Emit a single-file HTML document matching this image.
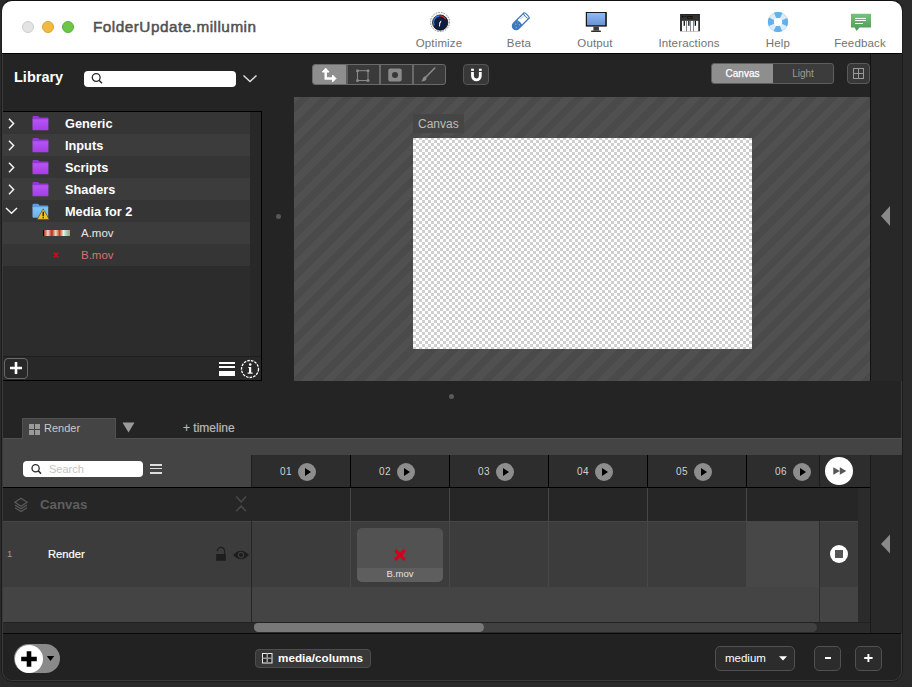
<!DOCTYPE html>
<html><head><meta charset="utf-8">
<style>
*{margin:0;padding:0;box-sizing:border-box}
html,body{width:912px;height:687px;overflow:hidden;background:#2a2a2a;font-family:"Liberation Sans",sans-serif}
.a{position:absolute}
#win{position:absolute;left:0;top:0;width:912px;height:687px}
.tl{position:absolute;top:21px;width:12px;height:12px;border-radius:50%}
.tbl{position:absolute;top:37px;font-size:11.5px;letter-spacing:0.15px;color:#737373;text-align:center;width:80px;white-space:nowrap}
.row{position:absolute;left:3px;width:247px;height:22px}
.rt{position:absolute;left:65px;top:4px;font-size:12px;font-weight:bold;color:#fff}
.fold{position:absolute;left:29px;top:4px}
.chev{position:absolute;left:6px;top:5px}
.col{position:absolute;top:455px;height:32px;border-left:1px solid #000}
.cn{position:absolute;top:9px;font-size:11px;color:#cfcfcf}
.pb{position:absolute;top:8px;width:18px;height:18px;border-radius:50%;background:#8d8d8d}
.pb:after{content:"";position:absolute;left:7px;top:5px;border-left:6px solid #000;border-top:4px solid transparent;border-bottom:4px solid transparent}
</style></head><body>
<div id="win">
  <!-- window frame -->
  <div class="a" style="left:1px;top:-1px;width:902px;height:683px;border:1px solid #1c1c1c;border-radius:11px"></div>
  <div class="a" style="left:2px;top:0;width:900px;height:681px;background:#242424;border-radius:10px;border:1px solid #3a3a3a;border-top:1px solid #111"></div>
  <!-- title bar -->
  <div class="a" style="left:2px;top:1px;width:900px;height:52px;background:#fff;border-radius:10px 10px 0 0"></div>
  <div class="a" style="left:2px;top:53px;width:900px;height:1px;background:#000"></div>
  <div class="tl" style="left:22px;background:#e3e3e3;border:1px solid #cdcdcd"></div>
  <div class="tl" style="left:42px;background:#f0b93f;border:1px solid #dca33a"></div>
  <div class="tl" style="left:62px;background:#6cc748;border:1px solid #5aaf3a"></div>
  <div class="a" style="left:93px;top:18px;font-size:15.3px;letter-spacing:0.5px;color:#505050;-webkit-text-stroke:0.5px #505050">FolderUpdate.millumin</div>
  <div class="tbl" style="left:399px">Optimize</div>
  <div class="tbl" style="left:479px">Beta</div>
  <div class="tbl" style="left:555px">Output</div>
  <div class="tbl" style="left:649px">Interactions</div>
  <div class="tbl" style="left:738px">Help</div>
  <div class="tbl" style="left:820px">Feedback</div>


  <!-- toolbar icons -->
  <svg class="a" style="left:428px;top:10px" width="24" height="24" viewBox="0 0 24 24">
    <circle cx="12" cy="12" r="9.6" fill="#f2f2f2" stroke="#8a8a8a" stroke-width="0.9" stroke-dasharray="1.6 1.1"/>
    <circle cx="12.2" cy="12.6" r="7.6" fill="#101c3c" stroke="#0a0a14" stroke-width="0.8"/>
    <path d="M6.2 15.5 A6.6 6.6 0 0 1 11.5 5.9" fill="none" stroke="#3d7ae0" stroke-width="1.3"/>
    <path d="M11.5 5.9 A6.6 6.6 0 0 1 17.6 9.2" fill="none" stroke="#c03030" stroke-width="1.3"/>
    <path d="M13.3 10.2 L13.1 12.6 L12.4 12.8 L11.9 16.6 L11.1 16.6 L11.3 12.6 Z" fill="#fff"/>
  </svg>
  <svg class="a" style="left:507px;top:9px" width="26" height="26" viewBox="0 0 26 26">
    <g transform="rotate(-45 13 13)">
      <path d="M7.5 9.3 L22 9.3 L22 16.7 L7.5 16.7 A3.7 3.7 0 0 1 7.5 9.3 Z" fill="#fff" stroke="#3a74b8" stroke-width="1.2"/>
      <path d="M7.5 9.3 L12.5 9.3 Q13.6 13 12.5 16.7 L7.5 16.7 A3.7 3.7 0 0 1 7.5 9.3 Z" fill="#3f79bd"/>
      <ellipse cx="22" cy="13" rx="1.2" ry="3.7" fill="#fff" stroke="#3a74b8" stroke-width="1"/>
      <circle cx="8.5" cy="11.5" r="0.7" fill="#a8c8ec"/><circle cx="6.5" cy="14" r="0.6" fill="#a8c8ec"/><circle cx="10.5" cy="14.5" r="0.6" fill="#a8c8ec"/><circle cx="11.2" cy="11.2" r="0.5" fill="#a8c8ec"/>
      <path d="M15.5 11.2 L19.5 11.2" stroke="#8ab0dc" stroke-width="0.7"/>
    </g>
  </svg>
  <svg class="a" style="left:582px;top:9px" width="28" height="26" viewBox="0 0 28 26">
    <defs><linearGradient id="scr" x1="0" y1="0" x2="0" y2="1"><stop offset="0" stop-color="#8cbcfa"/><stop offset="1" stop-color="#6a92d2"/></linearGradient></defs>
    <rect x="3.8" y="3" width="21" height="14.6" fill="#0c0a08"/>
    <rect x="4.9" y="3.9" width="18.4" height="12.4" fill="url(#scr)"/>
    <rect x="11.4" y="17.6" width="5.5" height="4" fill="#3a3a3a"/>
    <rect x="9.1" y="21.4" width="9.8" height="1.6" rx="0.6" fill="#2e2e2e"/>
  </svg>
  <svg class="a" style="left:677px;top:11px" width="26" height="24" viewBox="0 0 26 24">
    <rect x="3.1" y="3" width="19.8" height="17.3" fill="#1e1e1e"/>
    <rect x="4.2" y="3.8" width="17.6" height="5.6" fill="#333"/>
    <rect x="10.3" y="5" width="5.2" height="2.6" fill="#0a0a0a"/><rect x="11" y="5.8" width="3.8" height="1" fill="#8a1a1a"/>
    <circle cx="5.6" cy="5.8" r="0.8" fill="#000"/><circle cx="8.3" cy="5.6" r="0.6" fill="#000"/>
    <rect x="4.9" y="9.8" width="16.4" height="10.5" fill="#fafafa"/>
    <rect x="9.1" y="9.8" width="0.7" height="10.5" fill="#555"/><rect x="13" y="9.8" width="0.7" height="10.5" fill="#555"/><rect x="16.2" y="9.8" width="0.7" height="10.5" fill="#555"/>
    <rect x="6.6" y="9.8" width="1.3" height="5" fill="#0c1020"/><rect x="11.2" y="9.8" width="1.3" height="5" fill="#0c1020"/>
    <rect x="17.7" y="9.8" width="1.3" height="5" fill="#0c1020"/>
  </svg>
  <svg class="a" style="left:766px;top:10px" width="24" height="24" viewBox="0 0 24 24">
    <circle cx="12" cy="12" r="7.1" fill="none" stroke="#dcedf9" stroke-width="5.8"/>
    <circle cx="12" cy="12" r="7.1" fill="none" stroke="#62b0ec" stroke-width="5.8" stroke-dasharray="6.2 4.95" stroke-dashoffset="3.1"/>
    <circle cx="12" cy="12" r="9.9" fill="none" stroke="#4a9ee0" stroke-width="0.5" opacity="0.5"/>
  </svg>
  <svg class="a" style="left:848px;top:10px" width="26" height="24" viewBox="0 0 26 24">
    <defs><linearGradient id="grn" x1="0" y1="0" x2="0" y2="1"><stop offset="0" stop-color="#74c27c"/><stop offset="1" stop-color="#4c9856"/></linearGradient></defs>
    <path d="M3 3.8 L23 3.8 L23 17.5 L11.5 17.5 L8.6 21 L6.6 17.5 L3 17.5 Z" fill="url(#grn)"/>
    <rect x="7" y="7.9" width="11" height="1" fill="#fff"/><rect x="7" y="10" width="11" height="1" fill="#fff"/><rect x="7" y="13" width="8" height="1" fill="#fff"/>
  </svg>

  <!-- library header -->
  <div class="a" style="left:14px;top:69px;font-size:14.5px;font-weight:bold;color:#fff">Library</div>
  <div class="a" style="left:84px;top:71px;width:152px;height:16px;background:#fff;border-radius:4px"></div>
  <svg class="a" style="left:242px;top:74px" width="16" height="9"><path d="M1.5 1.5 L8 7.5 L14.5 1.5" fill="none" stroke="#ddd" stroke-width="1.5"/></svg>

  <!-- library list -->
  <div class="a" style="left:3px;top:111px;width:259px;height:270px;background:#2c2c2c;border-top:1px solid #000;border-right:1px solid #000;border-bottom:1px solid #000"></div>
  <div class="a" style="left:250px;top:112px;width:11px;height:245px;background:#282828"></div>
  <div class="row" style="top:112px;background:#353535"></div>
  <div class="row" style="top:134px;background:#3c3c3c"></div>
  <div class="row" style="top:156px;background:#353535"></div>
  <div class="row" style="top:178px;background:#3c3c3c"></div>
  <div class="row" style="top:200px;background:#353535"></div>
  <div class="row" style="top:222px;background:#3c3c3c"></div>
  <div class="row" style="top:244px;background:#353535"></div>
  <div class="a" style="left:65px;top:116px;font-size:12.75px;font-weight:bold;color:#fff">Generic</div>
  <div class="a" style="left:65px;top:138px;font-size:12.75px;font-weight:bold;color:#fff">Inputs</div>
  <div class="a" style="left:65px;top:160px;font-size:12.75px;font-weight:bold;color:#fff">Scripts</div>
  <div class="a" style="left:65px;top:182px;font-size:12.75px;font-weight:bold;color:#fff">Shaders</div>
  <div class="a" style="left:65px;top:204px;font-size:12.75px;font-weight:bold;color:#fff">Media for 2</div>
  <div class="a" style="left:81px;top:227px;font-size:11.5px;color:#e8e8e8">A.mov</div>
  <div class="a" style="left:81px;top:249px;font-size:11.5px;color:#dc6e72">B.mov</div>
  <svg width="0" height="0" style="position:absolute"><defs><linearGradient id="pf" x1="0" y1="0" x2="0" y2="1"><stop offset="0" stop-color="#b656f2"/><stop offset="1" stop-color="#a43ce8"/></linearGradient><linearGradient id="bf" x1="0" y1="0" x2="0" y2="1"><stop offset="0" stop-color="#86c4fa"/><stop offset="1" stop-color="#6aacec"/></linearGradient><linearGradient id="thumb" x1="0" y1="0" x2="1" y2="0"><stop offset="0" stop-color="#b03010"/><stop offset="0.15" stop-color="#f0d8d0"/><stop offset="0.3" stop-color="#c02818"/><stop offset="0.45" stop-color="#e8e0c0"/><stop offset="0.6" stop-color="#c04020"/><stop offset="0.75" stop-color="#f0f0e0"/><stop offset="0.85" stop-color="#90d8d0"/><stop offset="1" stop-color="#e88060"/></linearGradient></defs></svg>
  <svg class="a" style="left:8px;top:118px" width="7" height="11" viewBox="0 0 7 11"><path d="M1 0.8 L5.6 5.5 L1 10.2" fill="none" stroke="#f4f4f4" stroke-width="1.5"/></svg>
  <svg class="a" style="left:32px;top:116px" width="17" height="15" viewBox="0 0 17 15"><path d="M0.5 1.2 Q0.5 0 1.7 0 L5.6 0 Q6.4 0 6.9 0.8 L7.5 1.6 L15.5 1.6 Q16.4 1.6 16.4 2.5 L16.4 4 L0.5 4Z" fill="#9636d4"/><path d="M0.5 3.3 L16.4 3.3 L16.4 13.4 Q16.4 14.3 15.5 14.3 L1.4 14.3 Q0.5 14.3 0.5 13.4Z" fill="url(#pf)"/></svg>
  <svg class="a" style="left:8px;top:140px" width="7" height="11" viewBox="0 0 7 11"><path d="M1 0.8 L5.6 5.5 L1 10.2" fill="none" stroke="#f4f4f4" stroke-width="1.5"/></svg>
  <svg class="a" style="left:32px;top:138px" width="17" height="15" viewBox="0 0 17 15"><path d="M0.5 1.2 Q0.5 0 1.7 0 L5.6 0 Q6.4 0 6.9 0.8 L7.5 1.6 L15.5 1.6 Q16.4 1.6 16.4 2.5 L16.4 4 L0.5 4Z" fill="#9636d4"/><path d="M0.5 3.3 L16.4 3.3 L16.4 13.4 Q16.4 14.3 15.5 14.3 L1.4 14.3 Q0.5 14.3 0.5 13.4Z" fill="url(#pf)"/></svg>
  <svg class="a" style="left:8px;top:162px" width="7" height="11" viewBox="0 0 7 11"><path d="M1 0.8 L5.6 5.5 L1 10.2" fill="none" stroke="#f4f4f4" stroke-width="1.5"/></svg>
  <svg class="a" style="left:32px;top:160px" width="17" height="15" viewBox="0 0 17 15"><path d="M0.5 1.2 Q0.5 0 1.7 0 L5.6 0 Q6.4 0 6.9 0.8 L7.5 1.6 L15.5 1.6 Q16.4 1.6 16.4 2.5 L16.4 4 L0.5 4Z" fill="#9636d4"/><path d="M0.5 3.3 L16.4 3.3 L16.4 13.4 Q16.4 14.3 15.5 14.3 L1.4 14.3 Q0.5 14.3 0.5 13.4Z" fill="url(#pf)"/></svg>
  <svg class="a" style="left:8px;top:184px" width="7" height="11" viewBox="0 0 7 11"><path d="M1 0.8 L5.6 5.5 L1 10.2" fill="none" stroke="#f4f4f4" stroke-width="1.5"/></svg>
  <svg class="a" style="left:32px;top:182px" width="17" height="15" viewBox="0 0 17 15"><path d="M0.5 1.2 Q0.5 0 1.7 0 L5.6 0 Q6.4 0 6.9 0.8 L7.5 1.6 L15.5 1.6 Q16.4 1.6 16.4 2.5 L16.4 4 L0.5 4Z" fill="#9636d4"/><path d="M0.5 3.3 L16.4 3.3 L16.4 13.4 Q16.4 14.3 15.5 14.3 L1.4 14.3 Q0.5 14.3 0.5 13.4Z" fill="url(#pf)"/></svg>
  <svg class="a" style="left:5px;top:207px" width="13" height="8" viewBox="0 0 13 8"><path d="M1 1 L6.5 6.2 L12 1" fill="none" stroke="#f4f4f4" stroke-width="1.5"/></svg>
  <svg class="a" style="left:32px;top:203px" width="18" height="17" viewBox="0 0 18 17"><path d="M0.5 2 Q0.5 0.8 1.7 0.8 L5.6 0.8 Q6.4 0.8 6.9 1.6 L7.5 2.4 L15.2 2.4 Q16.2 2.4 16.2 3.3 L16.2 5 L0.5 5Z" fill="#5c9ee0"/><path d="M0.5 4.2 L16.2 4.2 L16.2 13.8 Q16.2 14.8 15.2 14.8 L1.5 14.8 Q0.5 14.8 0.5 13.8Z" fill="url(#bf)"/><path d="M11.2 5.8 L17.2 16.4 L5.2 16.4Z" fill="#f2c12e" stroke="#5a4200" stroke-width="0.6" stroke-linejoin="round"/><path d="M11.2 8.8 L11.2 13.2" stroke="#000" stroke-width="1.2"/><circle cx="11.2" cy="14.7" r="0.65" fill="#000"/></svg>
  <div class="a" style="left:43px;top:230px;width:27px;height:6px;background:linear-gradient(90deg,#b03010,#f0d8d0 15%,#c02818 30%,#e8e0c0 45%,#c04020 60%,#f0f0e0 75%,#90d8d0 85%,#e88060);border-left:1px solid #000"></div>
  <svg class="a" style="left:53px;top:252px" width="6" height="6" viewBox="0 0 6 6"><path d="M0.8 0.8 L5.2 5.2 M5.2 0.8 L0.8 5.2" stroke="#e4001a" stroke-width="1.6"/></svg>
  <!-- library footer -->
  <div class="a" style="left:3px;top:356px;width:258px;height:1px;background:#1e1e1e"></div>
  <div class="a" style="left:3px;top:357px;width:258px;height:23px;background:#282828"></div>
  <div class="a" style="left:4px;top:358px;width:24px;height:21px;border:1px solid #6a6a6a;border-radius:4px"></div>


  <svg class="a" style="left:90px;top:72px" width="14" height="14" viewBox="0 0 14 14"><circle cx="6.2" cy="5.5" r="3.9" fill="none" stroke="#2a2a2a" stroke-width="1.3"/><path d="M9 8.3 L12 11.3" stroke="#2a2a2a" stroke-width="1.5"/></svg>
  <svg class="a" style="left:4px;top:358px" width="24" height="21" viewBox="0 0 24 21"><path d="M12 4 L12 16 M6 10 L18 10" stroke="#fff" stroke-width="2.6"/></svg>
  <div class="a" style="left:219px;top:362px;width:16px;height:1.5px;background:#fff"></div>
  <div class="a" style="left:219px;top:366px;width:16px;height:2px;background:#fff"></div>
  <div class="a" style="left:219px;top:371px;width:16px;height:5px;background:#fff"></div>
  <svg class="a" style="left:240px;top:359px" width="20" height="20" viewBox="0 0 20 20"><circle cx="10" cy="10" r="8.5" fill="none" stroke="#fff" stroke-width="1.3" stroke-dasharray="2.6 1.1"/><circle cx="10.2" cy="5.6" r="1.25" fill="#fff"/><path d="M8.3 8 L11.2 8 L11.2 13.6 L12.6 13.6 L12.6 14.8 L7.6 14.8 L7.6 13.6 L9 13.6 L9 9.1 L8.3 9.1Z" fill="#fff"/></svg>

  <!-- canvas toolbar -->
  <div class="a" style="left:312px;top:64px;width:134px;height:21px;background:#3a3a3a;border:1px solid #6a6a6a;border-radius:3px;overflow:hidden">
    <div class="a" style="left:0;top:0;width:33px;height:19px;background:#8e8e8e"></div>
    <div class="a" style="left:33px;top:0;width:1.5px;height:19px;background:#5e5e5e"></div>
    <div class="a" style="left:66px;top:0;width:1.5px;height:19px;background:#6a6a6a"></div>
    <div class="a" style="left:99px;top:0;width:1.5px;height:19px;background:#6a6a6a"></div>
  </div>
  <svg class="a" style="left:312px;top:64px" width="134" height="21" viewBox="0 0 134 21">
    <path d="M13.7 4.8 L13.7 14.5 L21 14.5" fill="none" stroke="#fff" stroke-width="2.4"/>
    <path d="M10.3 8 L13.7 4.3 L17.1 8Z" fill="#fff" stroke="#fff" stroke-width="1"/>
    <path d="M20.5 11 L24 14.5 L20.5 18Z" fill="#fff" stroke="#fff" stroke-width="1"/>
    <rect x="45.5" y="6.7" width="10.5" height="9.8" fill="none" stroke="#8a8a8a" stroke-width="1"/>
    <circle cx="45.5" cy="6.7" r="1.5" fill="#8a8a8a"/><circle cx="56" cy="6.7" r="1.5" fill="#8a8a8a"/><circle cx="45.5" cy="16.5" r="1.5" fill="#8a8a8a"/><circle cx="56" cy="16.5" r="1.5" fill="#8a8a8a"/>
    <rect x="76.3" y="4.5" width="13.4" height="13.1" rx="2" fill="#8a8a8a"/>
    <circle cx="83" cy="11" r="3" fill="#383838"/>
    <path d="M122.8 4 L113.5 13.5" stroke="#8a8a8a" stroke-width="1.6" stroke-linecap="round"/>
    <path d="M113.6 12.2 Q111.5 12.2 110.8 14.5 Q110.4 16.5 109.2 17.3 Q112.8 17.6 114.3 15.5 Q115 14 113.6 12.2Z" fill="#8a8a8a"/>
  </svg>
  <div class="a" style="left:463px;top:64px;width:26px;height:21px;background:#383838;border:1px solid #555;border-radius:4px"></div>
  <svg class="a" style="left:463px;top:64px" width="26" height="21" viewBox="0 0 26 21">
    <path d="M9.5 8 L9.5 12 A3.9 3.9 0 0 0 17.3 12 L17.3 8" fill="none" stroke="#fff" stroke-width="2.8"/>
    <rect x="8.1" y="4.7" width="2.8" height="2.2" fill="#fff"/><rect x="15.9" y="4.7" width="2.8" height="2.2" fill="#fff"/>
  </svg>
  <div class="a" style="left:711px;top:63px;width:123px;height:21px;background:#3c3c3c;border:1px solid #5e5e5e;border-radius:3px;overflow:hidden">
    <div class="a" style="left:0;top:0;width:61px;height:19px;background:#8e8e8e"></div>
    <div class="a" style="left:0;top:3.5px;width:61px;text-align:center;font-size:10px;color:#fff;-webkit-text-stroke:0.25px #fff">Canvas</div>
    <div class="a" style="left:61px;top:3.5px;width:60px;text-align:center;font-size:10px;color:#9a9a9a">Light</div>
  </div>
  <div class="a" style="left:847px;top:63px;width:23px;height:21px;background:#383838;border:1px solid #5a5a5a;border-radius:4px"></div>
  <svg class="a" style="left:847px;top:63px" width="23" height="21" viewBox="0 0 23 21">
    <rect x="6.5" y="5.5" width="10" height="10" fill="none" stroke="#9a9a9a" stroke-width="1"/>
    <path d="M11.5 5.5 L11.5 15.5 M6.5 10.5 L16.5 10.5" stroke="#9a9a9a" stroke-width="1"/>
  </svg>
  <!-- canvas view -->
  <div class="a" style="left:294px;top:97px;width:576px;height:284px;overflow:hidden"><div class="a" style="left:-15.35px;top:0;width:600px;height:284px;background:repeating-linear-gradient(135deg,#4a4a4a 0 7.46px,#505050 7.46px 14.92px)"></div></div>
  <div class="a" style="left:870px;top:54px;width:1px;height:327px;background:#111"></div>
  <div class="a" style="left:871px;top:54px;width:31px;height:327px;background:#282828"></div>
  <div class="a" style="left:413px;top:114px;width:51px;height:19px;background:#454545;color:#bcbcbc;font-size:12px;padding:3px 0 0 5px">Canvas</div>
  <div class="a" style="left:413px;top:138px;width:339px;height:211px;background-color:#fff;background-image:linear-gradient(45deg,#cfcfcf 25%,transparent 25%,transparent 75%,#cfcfcf 75%),linear-gradient(45deg,#cfcfcf 25%,transparent 25%,transparent 75%,#cfcfcf 75%);background-size:6px 6px;background-position:3px -1px,6px 2px"></div>
  <div class="a" style="left:275.5px;top:213.5px;width:5px;height:5px;border-radius:50%;background:#575757"></div>
  <svg class="a" style="left:880px;top:206px" width="11" height="20"><path d="M10 0 L1 10 L10 20Z" fill="#8a8a8a"/></svg>

  <!-- divider -->
  <div class="a" style="left:449px;top:394px;width:5px;height:5px;border-radius:50%;background:#5a5a5a"></div>

  <!-- timeline tab strip -->
  <div class="a" style="left:3px;top:438px;width:899px;height:49px;background:#444;border-top:1px solid #515151"></div>
  <div class="a" style="left:22px;top:418px;width:94px;height:21px;background:#444;border:1px solid #515151;border-bottom:none"></div>
  <svg class="a" style="left:28px;top:423px" width="13" height="13" viewBox="0 0 13 13"><rect x="1" y="1" width="5" height="5" fill="#9a9a9a"/><rect x="7" y="1" width="5" height="5" fill="#9a9a9a"/><rect x="1" y="7" width="5" height="5" fill="#9a9a9a"/><rect x="7" y="7" width="5" height="5" fill="#9a9a9a"/></svg>
  <div class="a" style="left:44px;top:422px;font-size:11px;color:#cacaca">Render</div>
  <svg class="a" style="left:122px;top:422px" width="13" height="11"><path d="M0.5 0.5 L12.5 0.5 L6.5 10.5Z" fill="#9a9a9a"/></svg>
  <div class="a" style="left:183px;top:421px;font-size:12px;color:#bababa;-webkit-text-stroke:0.2px #bababa">+ timeline</div>
  <div class="a" style="left:23px;top:461px;width:120px;height:16px;background:#fff;border-radius:4px"></div>
  <svg class="a" style="left:30px;top:463px" width="13" height="13" viewBox="0 0 13 13"><circle cx="5.6" cy="5.2" r="3.6" fill="none" stroke="#2a2a2a" stroke-width="1.3"/><path d="M8.2 7.8 L11 10.6" stroke="#2a2a2a" stroke-width="1.5"/></svg>
  <div class="a" style="left:49px;top:463px;font-size:11px;color:#c4c4c4">Search</div>
  <div class="a" style="left:150px;top:464px;width:12px;height:1.6px;background:#ddd"></div>
  <div class="a" style="left:150px;top:467.8px;width:12px;height:1.6px;background:#ddd"></div>
  <div class="a" style="left:150px;top:472px;width:12px;height:1.6px;background:#ddd"></div>

  <!-- timeline header -->
  <div class="a" style="left:251px;top:455px;width:619px;height:32px;background:#2d2d2d"></div>
  <div class="a" style="left:870px;top:455px;width:32px;height:178px;background:#282828"></div>
  <div class="a" style="left:3px;top:487px;width:867px;height:1px;background:#000"></div>

  <!-- rows -->
  <div class="a" style="left:3px;top:488px;width:855px;height:33px;background:#262626"></div>
  <div class="a" style="left:3px;top:521px;width:855px;height:66px;background:#3c3c3c;border-top:1px solid #464646"></div>
  <div class="a" style="left:746px;top:522px;width:73px;height:65px;background:#474747"></div>
  <div class="a" style="left:3px;top:587px;width:855px;height:35px;background:#444"></div>
  <div class="a" style="left:3px;top:622px;width:867px;height:11px;background:#2b2b2b;border-top:1px solid #222"></div>
  <div class="a" style="left:254px;top:623px;width:230px;height:8px;border-radius:4px;background:#777"></div>
  <div class="a" style="left:3px;top:633px;width:898px;height:1px;background:#080808"></div>
  <div class="a" style="left:858px;top:488px;width:12px;height:134px;background:#2b2b2b"></div>
  <div class="a" style="left:251px;top:521px;width:1px;height:101px;background:#262626"></div>
  <div class="a" style="left:819px;top:455px;width:1px;height:32px;background:#1a1a1a"></div>
  <div class="a" style="left:819px;top:521px;width:1px;height:101px;background:#2e2e2e"></div>
  <div class="a" style="left:251px;top:455px;width:1px;height:32px;background:#1e1e1e"></div>
  <div class="a" style="left:280px;top:466px;font-size:10px;letter-spacing:0.5px;color:#cfcfcf">01</div>
  <div class="pb" style="left:298px;top:463px"></div>
  <div class="a" style="left:350px;top:455px;width:1px;height:32px;background:#000"></div>
  <div class="a" style="left:350px;top:488px;width:1px;height:99px;background:#474747"></div>
  <div class="a" style="left:379px;top:466px;font-size:10px;letter-spacing:0.5px;color:#cfcfcf">02</div>
  <div class="pb" style="left:397px;top:463px"></div>
  <div class="a" style="left:449px;top:455px;width:1px;height:32px;background:#000"></div>
  <div class="a" style="left:449px;top:488px;width:1px;height:99px;background:#474747"></div>
  <div class="a" style="left:478px;top:466px;font-size:10px;letter-spacing:0.5px;color:#cfcfcf">03</div>
  <div class="pb" style="left:496px;top:463px"></div>
  <div class="a" style="left:548px;top:455px;width:1px;height:32px;background:#000"></div>
  <div class="a" style="left:548px;top:488px;width:1px;height:99px;background:#474747"></div>
  <div class="a" style="left:577px;top:466px;font-size:10px;letter-spacing:0.5px;color:#cfcfcf">04</div>
  <div class="pb" style="left:595px;top:463px"></div>
  <div class="a" style="left:647px;top:455px;width:1px;height:32px;background:#000"></div>
  <div class="a" style="left:647px;top:488px;width:1px;height:99px;background:#474747"></div>
  <div class="a" style="left:676px;top:466px;font-size:10px;letter-spacing:0.5px;color:#cfcfcf">05</div>
  <div class="pb" style="left:694px;top:463px"></div>
  <div class="a" style="left:746px;top:455px;width:1px;height:32px;background:#000"></div>
  <div class="a" style="left:746px;top:488px;width:1px;height:99px;background:#474747"></div>
  <div class="a" style="left:775px;top:466px;font-size:10px;letter-spacing:0.5px;color:#cfcfcf">06</div>
  <div class="pb" style="left:793px;top:463px"></div>
  <div class="a" style="left:825px;top:457px;width:28px;height:28px;border-radius:50%;background:#fff"></div>
  <svg class="a" style="left:825px;top:457px" width="28" height="28" viewBox="0 0 28 28"><path d="M8.3 10.2 L14.8 14 L8.3 17.8Z M14.8 10.2 L21.3 14 L14.8 17.8Z" fill="#555"/></svg>
  <div class="a" style="left:830px;top:545px;width:18px;height:18px;border-radius:50%;background:#fff"></div>
  <div class="a" style="left:835px;top:550px;width:8px;height:8px;background:#555"></div>

  <svg class="a" style="left:13px;top:497px" width="16" height="16" viewBox="0 0 16 16"><path d="M8 1.2 L14.2 5.2 L8 9.2 L1.8 5.2Z" fill="none" stroke="#5a5a5a" stroke-width="1.2"/><path d="M2 8 L8 11.8 L14 8 M2 10.8 L8 14.6 L14 10.8" fill="none" stroke="#5a5a5a" stroke-width="1.2"/></svg>
  <div class="a" style="left:40px;top:497px;font-size:13.3px;font-weight:bold;color:#5e5e5e">Canvas</div>
  <svg class="a" style="left:234px;top:494px" width="14" height="20" viewBox="0 0 14 20"><path d="M2.2 2.6 L7.1 8 L12 2.6 M2.2 17.3 L7.1 12.2 L12 17.3" fill="none" stroke="#4a4a4a" stroke-width="1.5"/></svg>
  <div class="a" style="left:7px;top:548px;font-size:9.5px;color:#9a9a9a">1</div>
  <div class="a" style="left:48px;top:548px;font-size:11.2px;color:#fff;-webkit-text-stroke:0.2px #fff">Render</div>
  <svg class="a" style="left:215px;top:546px" width="12" height="16" viewBox="0 0 12 16"><path d="M2.4 5.2 L2.4 5 A3.6 3.6 0 0 1 9.6 5 L9.6 8" fill="none" stroke="#1e1e1e" stroke-width="1.3"/><rect x="1.2" y="8" width="9.6" height="6.8" fill="#1e1e1e"/></svg>
  <svg class="a" style="left:232px;top:549px" width="18" height="12" viewBox="0 0 18 12"><path d="M1 6 Q9 -2.5 17 6 Q9 14.5 1 6Z" fill="#1e1e1e"/><circle cx="9" cy="6" r="2.6" fill="none" stroke="#3c3c3c" stroke-width="1.1"/></svg>
  <!-- clip -->
  <div class="a" style="left:357px;top:528px;width:86px;height:54px;border-radius:5px;background:#525252;overflow:hidden">
    <div class="a" style="left:0;top:40px;width:86px;height:14px;background:#5e5e5e"></div>
  </div>
  <svg class="a" style="left:393px;top:548px" width="14" height="14" viewBox="0 0 14 14"><path d="M2.2 2.2 L11.8 11.8 M11.8 2.2 L2.2 11.8" stroke="#d4001a" stroke-width="3.2"/></svg>
  <div class="a" style="left:357px;top:568px;width:86px;text-align:center;font-size:9.5px;color:#e4e4e4">B.mov</div>

  <!-- bottom bar -->
  <div class="a" style="left:3px;top:634px;width:898px;height:46px;background:#222;border-radius:0 0 9px 9px"></div>
  <div class="a" style="left:254px;top:623px;width:563px;height:9px;border-radius:4.5px;background:#404040"></div>
  <div class="a" style="left:254px;top:623px;width:230px;height:9px;border-radius:4.5px;background:#787878"></div>
  <div class="a" style="left:870px;top:455px;width:1px;height:178px;background:#1a1a1a"></div>
  <svg class="a" style="left:880px;top:534px" width="11" height="20"><path d="M10 0.5 L1 10 L10 19.5Z" fill="#8a8a8a"/></svg>
  <div class="a" style="left:14px;top:644px;width:46px;height:29px;border-radius:15px;background:#8a8a8a"></div>
  <div class="a" style="left:15px;top:645px;width:28px;height:28px;border-radius:50%;background:#fff"></div>
  <svg class="a" style="left:15px;top:645px" width="28" height="28" viewBox="0 0 28 28"><path d="M14 6.2 L14 21.8 M6.2 14 L21.8 14" stroke="#000" stroke-width="4.6"/></svg>
  <svg class="a" style="left:46px;top:655px" width="9" height="7" viewBox="0 0 9 7"><path d="M0.8 1 L8.2 1 L4.5 6Z" fill="#000"/></svg>
  <div class="a" style="left:255px;top:649px;width:116px;height:19px;background:#383838;border:1px solid #4e4e4e;border-radius:4px"></div>
  <svg class="a" style="left:261px;top:652px" width="12" height="12" viewBox="0 0 12 12"><rect x="1.5" y="1.5" width="9.5" height="9.5" fill="#262626" stroke="#eee" stroke-width="1"/><path d="M6.25 1.5 L6.25 11 M1.5 6.25 L11 6.25" stroke="#9a9a9a" stroke-width="1.6"/></svg>
  <div class="a" style="left:278px;top:651px;font-size:11.7px;font-weight:bold;color:#fff">media/columns</div>
  <div class="a" style="left:715px;top:646px;width:80px;height:25px;background:#2c2c2c;border:1px solid #505050;border-radius:5px"></div>
  <div class="a" style="left:725px;top:652px;font-size:11.5px;color:#fff">medium</div>
  <svg class="a" style="left:778px;top:656px" width="10" height="5" viewBox="0 0 10 5"><path d="M1 0.3 L9 0.3 L5 4.5Z" fill="#fff"/></svg>
  <div class="a" style="left:814px;top:646px;width:27px;height:25px;background:#2c2c2c;border:1px solid #505050;border-radius:5px"></div>
  <div class="a" style="left:825px;top:657px;width:5.5px;height:2px;background:#fff"></div>
  <div class="a" style="left:855px;top:646px;width:27px;height:25px;background:#2c2c2c;border:1px solid #505050;border-radius:5px"></div>
  <svg class="a" style="left:855px;top:646px" width="27" height="25" viewBox="0 0 27 25"><path d="M13.4 8 L13.4 16 M9.2 12 L17.6 12" stroke="#fff" stroke-width="1.9"/></svg>
</div>
</body></html>
